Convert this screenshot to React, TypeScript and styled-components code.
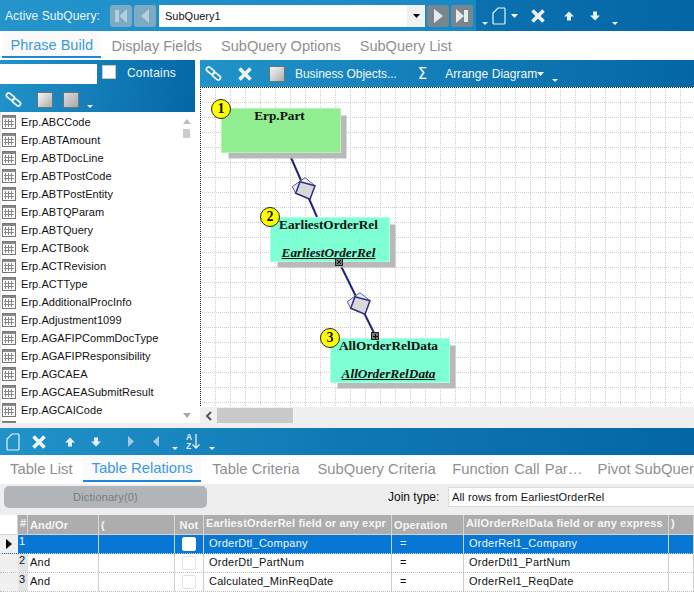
import React from 'react'
import styled, { createGlobalStyle } from 'styled-components'

const GlobalStyle = createGlobalStyle`
    html, body {
        margin: 0;
        padding: 0;
        background: #fff;
        font-family: "Liberation Sans", Arial, sans-serif;
    }
    * { box-sizing: border-box; }
`

const BAR = 'linear-gradient(90deg, #2193c9 0%, #0f78b4 50%, #0466a5 100%)'

const Shell = styled.div`
    width: 694px;
    height: 613px;
    overflow: hidden;
    display: flex;
    flex-direction: column;
    background: #fff;
`

/* top bar */
const TopBar = styled.div`
    height: 31px;
    flex: none;
    display: flex;
    align-items: center;
    background: ${BAR};
`
const SubQueryGroup = styled.div`
    width: 476px;
    height: 31px;
    flex: none;
    display: flex;
    align-items: center;
    padding-left: 5px;
    background: linear-gradient(90deg, #2494cb, #1988c4);
`
const BarLabel = styled.span`
    color: #eef6fb;
    font-size: 12px;
    letter-spacing: 0.1px;
    width: 105px;
    flex: none;
`
const NavButton = styled.div<{ $off?: boolean }>`
    width: 22px;
    height: 22px;
    flex: none;
    margin-right: 2px;
    border-radius: 3px;
    background: ${p => (p.$off ? '#7dabc4' : '#78878f')};
    color: ${p => (p.$off ? '#b4cfdd' : '#e8eaeb')};
    display: flex;
    align-items: center;
    justify-content: center;
`
const Combo = styled.div`
    width: 266px;
    height: 22px;
    flex: none;
    margin: 0 2px 0 1px;
    background: #fff;
    display: flex;
    align-items: center;
    justify-content: space-between;
    padding-left: 6px;
    font-size: 11px;
    color: #111;
`
const ComboArrow = styled.div`
    width: 18px;
    height: 22px;
    background: #f1f1f1;
    display: flex;
    align-items: center;
    justify-content: center;
`

/* toolbars */
const Tool = styled.span<{ $left?: number; $down?: number }>`
    display: inline-flex;
    align-items: center;
    flex: none;
    margin-left: ${p => p.$left ?? 0}px;
    margin-top: ${p => p.$down ?? 0}px;
    color: #fff;
`
const ToolText = styled(Tool)<{ $tight?: boolean }>`
    font-size: 12px;
    letter-spacing: ${p => (p.$tight ? '-0.05px' : '0.05px')};
    color: #f4f9fc;
`
const Sigma = styled(Tool)`
    font-size: 15px;
    font-family: "DejaVu Sans", sans-serif;
`
const Shade = styled.span<{ $dark?: boolean }>`
    display: inline-block;
    width: 16px;
    height: 16px;
    flex: none;
    border: 1px solid #6d7478;
    background: ${p =>
        p.$dark
            ? 'linear-gradient(135deg, #dcdcdc, #a9a9a9)'
            : 'linear-gradient(135deg, #f7f7f7, #adadad)'};
`

/* tabs */
const TabBar = styled.div<{ $pad: number }>`
    height: 29px;
    flex: none;
    display: flex;
    align-items: stretch;
    padding-left: ${p => p.$pad}px;
    background: #fff;
    white-space: nowrap;
    overflow: hidden;
`
const Tab = styled.div<{ $active?: boolean; $left?: number }>`
    display: flex;
    align-items: center;
    padding: 2px ${p => (p.$active ? 8.5 : 0)}px ${p => (p.$active ? 2 : 0)}px;
    margin-left: ${p => p.$left ?? 0}px;
    font-size: 14.800px;
    color: ${p => (p.$active ? '#3a9be2' : '#8f8f8f')};
    border-bottom: 2px solid ${p => (p.$active ? '#1c86dc' : 'transparent')};
    background: ${p => (p.$active ? '#fafafa' : 'transparent')};
    margin-bottom: 2px;
`
const TopTab = styled(Tab)`
    padding-top: 4px;
    font-size: 14.550px;
`
const WideTab = styled(Tab)`
    word-spacing: 1px;
`

/* middle */
const Middle = styled.div`
    height: 363px;
    flex: none;
    display: flex;
`
const SidePanel = styled.div`
    width: 195px;
    flex: none;
    display: flex;
    flex-direction: column;
    background: #fff;
`
const SideHeader = styled.div`
    height: 52px;
    flex: none;
    background: linear-gradient(100deg, #2194ca, #0466a5);
`
const SideRow = styled.div<{ $height: number }>`
    height: ${p => p.$height}px;
    display: flex;
    align-items: center;
`
const SearchBox = styled.div`
    width: 97px;
    height: 20px;
    flex: none;
    background: #fff;
`
const WhiteCheck = styled.span`
    width: 14px;
    height: 14px;
    margin: -3px 0 0 5px;
    flex: none;
    background: #fff;
    border: 1px solid #c8c8c8;
`
const ContainsLabel = styled.span`
    margin: -2px 0 0 11px;
    font-size: 12px;
    color: #f0f7fb;
    letter-spacing: 0.2px;
`
const ListArea = styled.div`
    position: relative;
    flex: 1;
    min-height: 0;
    overflow: hidden;
    border-left: 1px solid #e6e6e6;
    padding-top: 1px;
`
const ListItem = styled.div`
    height: 18px;
    display: flex;
    align-items: center;
    padding-left: 1px;
    font-size: 11px;
    letter-spacing: 0.05px;
    color: #111;
`
const ListText = styled.span`
    margin-left: 5px;
`
const ScrollTrack = styled.div`
    position: absolute;
    top: 0;
    right: 0;
    bottom: 0;
    width: 17px;
    background: #fff;
    display: flex;
    flex-direction: column;
    align-items: center;
`
const ScrollThumb = styled.div`
    width: 7px;
    height: 9px;
    margin-top: 5px;
    background: #cdcdcd;
`
const Spacer = styled.div`
    flex: 1;
`
const ScrollArrow = styled.div<{ $down?: boolean }>`
    width: 0;
    height: 0;
    margin-top: ${p => (p.$down ? 0 : 7)}px;
    margin-bottom: ${p => (p.$down ? 5 : 0)}px;
    border-left: 4px solid transparent;
    border-right: 4px solid transparent;
    border-bottom: ${p => (p.$down ? '0' : '5px solid #bdbdbd')};
    border-top: ${p => (p.$down ? '5px solid #a8a8a8' : '0')};
`
const Gutter = styled.div`
    width: 5px;
    flex: none;
    background: #fff;
`
const DiagramPanel = styled.div`
    flex: 1;
    min-width: 0;
    display: flex;
    flex-direction: column;
`
const DiagramBar = styled.div`
    height: 27px;
    flex: none;
    display: flex;
    align-items: center;
    background: linear-gradient(90deg, #2193c9, #0466a5);
`
const Canvas = styled.div`
    position: relative;
    height: 320px;
    flex: none;
    overflow: hidden;
    background: #fff;
`
const CanvasDrawing = styled.svg`
    position: absolute;
    left: 0;
    top: 0;
`
const Node = styled.div<{ $x: number; $y: number; $fill: string }>`
    position: absolute;
    left: ${p => p.$x}px;
    top: ${p => p.$y}px;
    width: 120px;
    height: 45px;
    padding-right: 3px;
    background: ${p => p.$fill};
    border: 1px solid rgba(255, 255, 255, 0.35);
    box-shadow: 6.500px 6.500px 0 -1px #b9b9b9;
    text-align: center;
    font-family: "Liberation Serif", "Times New Roman", serif;
    font-weight: bold;
    color: #111;
`
const NodeTitle = styled.div`
    font-size: 13.300px;
    line-height: 14px;
`
const NodeAlias = styled.div`
    font-size: 13.300px;
    line-height: 14px;
    margin-top: 14px;
    font-style: italic;
    text-decoration: underline;
`
const Badge = styled.div<{ $x: number; $y: number }>`
    position: absolute;
    left: ${p => p.$x}px;
    top: ${p => p.$y}px;
    width: 20px;
    height: 20px;
    border-radius: 50%;
    background: #ffff00;
    border: 1px solid #222;
    display: flex;
    align-items: center;
    justify-content: center;
    font-family: "Liberation Serif", serif;
    font-weight: bold;
    font-size: 14px;
    color: #111;
`
const HScroll = styled.div`
    flex: 1;
    display: flex;
    align-items: center;
    background: #f0f0f0;
    padding-top: 1px;
`
const HThumb = styled.div`
    width: 76px;
    height: 15px;
    margin-left: 5px;
    background: #c9c9c9;
`
const LeftChevron = styled.span`
    margin-left: 5px;
    display: inline-flex;
`

/* lower part */
const Divider = styled.div`
    height: 5px;
    flex: none;
    background: #eeeeee;
`
const LowerBar = styled.div`
    height: 27px;
    flex: none;
    display: flex;
    align-items: center;
    background: ${BAR};
`
const FilterRow = styled.div`
    height: 31px;
    flex: none;
    display: flex;
    align-items: flex-start;
    background: #eeeeee;
    padding: 2px 0 0 4px;
`
const DictButton = styled.div`
    width: 203px;
    height: 22px;
    flex: none;
    border-radius: 5px;
    background: #b1b5b7;
    color: #7a7d7f;
    font-size: 11px;
    letter-spacing: 0.2px;
    display: flex;
    align-items: center;
    justify-content: center;
`
const JoinLabel = styled.span`
    margin-left: 181px;
    width: 60px;
    flex: none;
    line-height: 22px;
    font-size: 12px;
    color: #111;
`
const JoinInput = styled.div`
    flex: 1;
    height: 20px;
    margin-top: 1px;
    padding-left: 3px;
    background: #fff;
    border: 1px solid #dcdcdc;
    border-right: 0;
    font-size: 11px;
    line-height: 18px;
    letter-spacing: 0.15px;
    color: #111;
`
const COLUMNS = '18px 10px 71px 76px 29px 188px 72px 205px 25px'
const HeadRow = styled.div`
    height: 20px;
    flex: none;
    display: grid;
    grid-template-columns: ${COLUMNS};
    background: #adadad;
    border-bottom: 1px solid #d4d4d4;
`
const HeadCell = styled.div<{ $center?: boolean; $low?: boolean }>`
    border-right: 1px solid #d6d6d6;
    padding-left: ${p => (p.$center ? 0 : 2)}px;
    padding-top: ${p => (p.$low ? 2 : 0)}px;
    text-align: ${p => (p.$center ? 'center' : 'left')};
    color: #f5f5f5;
    font-size: 11px;
    font-weight: bold;
    line-height: 17px;
    letter-spacing: 0.15px;
    white-space: nowrap;
    overflow: hidden;
`
const Corner = styled.div`
    background: #fff;
    border-right: 1px solid #d6d6d6;
`
const DataRow = styled.div<{ $selected?: boolean }>`
    height: 19px;
    flex: none;
    display: grid;
    grid-template-columns: ${COLUMNS};
    background: ${p => (p.$selected ? '#0777d6' : '#fff')};
    color: ${p => (p.$selected ? '#f2f8fd' : '#111')};
    border-bottom: 1px dotted ${p => (p.$selected ? '#d8d8d8' : '#bdbdbd')};
`
const RowMark = styled.div`
    background: #f0f0f0;
    display: flex;
    align-items: center;
    justify-content: center;
`
const RowNum = styled.div<{ $selected?: boolean }>`
    background: ${p => (p.$selected ? '#0777d6' : '#e4e4e4')};
    font-size: 11px;
    line-height: 13px;
    padding-left: 1px;
`
const Cell = styled.div<{ $inset?: number }>`
    border-right: 1px solid #cfcfcf;
    padding-left: ${p => p.$inset ?? 2}px;
    font-size: 11px;
    line-height: 16px;
    letter-spacing: 0.25px;
    white-space: nowrap;
    overflow: hidden;
`
const CheckCell = styled(Cell)`
    padding: 2px 0 0 7px;
`
const RowCheck = styled.div<{ $on?: boolean }>`
    width: 14px;
    height: 14px;
    border-radius: 2px;
    background: #fff;
    border: 1px solid ${p => (p.$on ? '#fff' : '#e2e2e2')};
`
const SortGlyph = styled.span`
    display: inline-flex;
    align-items: center;
    margin-left: 8px;
`
const SortLetters = styled.span`
    display: flex;
    flex-direction: column;
    font-size: 8.500px;
    font-weight: bold;
    line-height: 9px;
    color: #dfeef6;
`

const Chain = () => (
    <svg width="17" height="17" viewBox="0 0 17 17" fill="none" stroke="#e8f1f6" strokeWidth="1.700">
        <rect x="1" y="3.500" width="9" height="4.500" rx="2.200" transform="rotate(40 5.500 5.700)" />
        <rect x="7" y="9" width="9" height="4.500" rx="2.200" transform="rotate(40 11.500 11.200)" />
    </svg>
)
const Cross = () => (
    <svg width="14" height="14" viewBox="0 0 14 14" stroke="#f2f6f9" strokeWidth="3.600">
        <path d="M1.500 1.500l11 11M12.500 1.500l-11 11" />
    </svg>
)
const Page = () => (
    <svg width="14" height="18" viewBox="0 0 14 18" fill="none" stroke="#e9f2f7" strokeWidth="1.200">
        <path d="M6 1h6.500a1 1 0 0 1 0.500 1v14a1 1 0 0 1-1 1H2a1 1 0 0 1-1-1V6z" />
    </svg>
)
const UpArrow = () => (
    <svg width="10" height="10" viewBox="0 0 10 10" fill="#e6f0f6">
        <path d="M5 0.500L10 5.500H7V9.500H3V5.500H0z" />
    </svg>
)
const DownArrow = () => (
    <svg width="10" height="10" viewBox="0 0 10 10" fill="#e6f0f6">
        <path d="M5 9.500L10 4.500H7V0.500H3V4.500H0z" />
    </svg>
)
const Overflow = () => (
    <svg width="6" height="18" viewBox="0 0 6 18" fill="#f2f7fa">
        <path d="M0 14h6l-3 3z" />
    </svg>
)
const Caret = ({ color = '#fff' }: { color?: string }) => (
    <svg width="7" height="4" viewBox="0 0 7 4" fill={color}>
        <path d="M0 0h7L3.500 4z" />
    </svg>
)
const SkipFirst = () => (
    <svg width="16" height="16" viewBox="0 0 16 16" fill="currentColor">
        <path d="M2 2h4v12H2zM14 1v14L6.500 8z" />
    </svg>
)
const Back = () => (
    <svg width="12" height="16" viewBox="0 0 12 16" fill="currentColor">
        <path d="M10 1v14L2 8z" />
    </svg>
)
const Forward = () => (
    <svg width="12" height="16" viewBox="0 0 12 16" fill="currentColor">
        <path d="M2 1v14l9-7z" />
    </svg>
)
const SkipLast = () => (
    <svg width="16" height="16" viewBox="0 0 16 16" fill="currentColor">
        <path d="M2 1v14l8-7zM10 2h4v12h-4z" />
    </svg>
)
const TriRight = () => (
    <svg width="6" height="11" viewBox="0 0 6 11" fill="#a9c9dc">
        <path d="M0 0v11l6-5.500z" />
    </svg>
)
const TriLeft = () => (
    <svg width="6" height="11" viewBox="0 0 6 11" fill="#a9c9dc">
        <path d="M6 0v11L0 5.500z" />
    </svg>
)
const SortArrow = () => (
    <svg width="8" height="15" viewBox="0 0 8 15" fill="none" stroke="#e6f0f6" strokeWidth="1.300">
        <path d="M4 0v14M0.500 10.500L4 14l3.500-3.500" />
    </svg>
)
const TableIcon = () => (
    <svg width="14" height="14" viewBox="0 0 14 14" shapeRendering="crispEdges">
        <rect x="0.500" y="0.500" width="13" height="13" fill="#fff" stroke="#777" />
        <rect x="1" y="1" width="12" height="2" fill="#8a8a8a" />
        <path d="M3.500 4v8M6.500 4v8M9.500 4v8M2 6.500h10M2 9.500h10" stroke="#888" fill="none" />
    </svg>
)
const RowPointer = () => (
    <svg width="6" height="10" viewBox="0 0 6 10" fill="#000">
        <path d="M0 0v10l6-5z" />
    </svg>
)

const Diamond = ({ dx, dy }: { dx: number; dy: number }) => (
    <g transform={`translate(${dx} ${dy})`}>
        <path d="M92.300 99.700L105 90.700L115 98.700L95.700 106.300z" fill="#e8eef5" stroke="#5b5ba0" strokeWidth="1" />
        <path d="M100 94.700L115 98.700L110 112.300L95.700 106.300z" fill="#d9d9d9" stroke="#2e2e85" strokeWidth="1.500" />
    </g>
)

const Marker = ({ x, y, plus }: { x: number; y: number; plus?: boolean }) => (
    <g shapeRendering="crispEdges">
        <rect x={x} y={y} width="7" height="7" fill="#777" stroke="#222" />
        <path
            d={plus
                ? `M${x + 1} ${y + 3.500}h5M${x + 3.500} ${y + 1}v5`
                : `M${x + 1.500} ${y + 1.500}l4 4M${x + 5.500} ${y + 1.500}l-4 4`}
            stroke="#111"
        />
    </g>
)

const tables = [
    'ABCCode', 'ABTAmount', 'ABTDocLine', 'ABTPostCode', 'ABTPostEntity', 'ABTQParam', 'ABTQuery',
    'ACTBook', 'ACTRevision', 'ACTType', 'AdditionalProcInfo', 'Adjustment1099', 'AGAFIPCommDocType',
    'AGAFIPResponsibility', 'AGCAEA', 'AGCAEASubmitResult', 'AGCAICode',
]

const relations = [
    { id: 1, andOr: '', left: 'OrderDtl_Company', right: 'OrderRel1_Company' },
    { id: 2, andOr: 'And', left: 'OrderDtl_PartNum', right: 'OrderDtl1_PartNum' },
    { id: 3, andOr: 'And', left: 'Calculated_MinReqDate', right: 'OrderRel1_ReqDate' },
]

export default function App() {
    return (
        <Shell>
            <GlobalStyle />
            <TopBar>
                <SubQueryGroup>
                    <BarLabel>Active SubQuery:</BarLabel>
                    <NavButton $off><SkipFirst /></NavButton>
                    <NavButton $off><Back /></NavButton>
                    <Combo>
                        SubQuery1
                        <ComboArrow><Caret color="#000" /></ComboArrow>
                    </Combo>
                    <NavButton><Forward /></NavButton>
                    <NavButton><SkipLast /></NavButton>
                </SubQueryGroup>
                <Tool $left={6} $down={3}><Overflow /></Tool>
                <Tool $left={4}><Page /></Tool>
                <Tool $left={5}><Caret /></Tool>
                <Tool $left={13}><Cross /></Tool>
                <Tool $left={19}><UpArrow /></Tool>
                <Tool $left={16}><DownArrow /></Tool>
                <Tool $left={12} $down={3}><Overflow /></Tool>
            </TopBar>

            <TabBar $pad={2}>
                <TopTab $active>Phrase Build</TopTab>
                <TopTab $left={10}>Display Fields</TopTab>
                <TopTab $left={19}>SubQuery Options</TopTab>
                <TopTab $left={19}>SubQuery List</TopTab>
            </TabBar>

            <Middle>
                <SidePanel>
                    <SideHeader>
                        <SideRow $height={27}>
                            <SearchBox />
                            <WhiteCheck />
                            <ContainsLabel>Contains</ContainsLabel>
                        </SideRow>
                        <SideRow $height={25}>
                            <Tool $left={5}><Chain /></Tool>
                            <Tool $left={15}><Shade /></Tool>
                            <Tool $left={10}><Shade $dark /></Tool>
                            <Tool $left={8}><Overflow /></Tool>
                        </SideRow>
                    </SideHeader>
                    <ListArea>
                        {tables.map(name => (
                            <ListItem key={name}>
                                <TableIcon />
                                <ListText>Erp.{name}</ListText>
                            </ListItem>
                        ))}
                        <ListItem><TableIcon /></ListItem>
                        <ScrollTrack>
                            <ScrollArrow />
                            <ScrollThumb />
                            <Spacer />
                            <ScrollArrow $down />
                        </ScrollTrack>
                    </ListArea>
                </SidePanel>
                <Gutter />
                <DiagramPanel>
                    <DiagramBar>
                        <Tool $left={5}><Chain /></Tool>
                        <Tool $left={16}><Cross /></Tool>
                        <Tool $left={17}><Shade /></Tool>
                        <ToolText $left={10} $tight>Business Objects...</ToolText>
                        <Sigma $left={21}>Σ</Sigma>
                        <ToolText $left={18}>Arrange Diagram</ToolText>
                        <Tool><Caret /></Tool>
                        <Tool $left={8}><Overflow /></Tool>
                    </DiagramBar>
                    <Canvas>
                        <CanvasDrawing width="494" height="320" viewBox="0 0 494 320">
                            <defs>
                                <pattern id="dots" width="30" height="30" patternUnits="userSpaceOnUse">
                                    <path
                                        d="M0 0.500H30M0 15.500H30M0.500 0V30M15.500 0V30"
                                        stroke="#cfcfcf"
                                        strokeDasharray="1 1"
                                        fill="none"
                                        shapeRendering="crispEdges"
                                    />
                                </pattern>
                            </defs>
                            <rect width="494" height="320" fill="url(#dots)" />
                            <path
                                d="M0.500 0V320M0 0.500H494"
                                stroke="#222"
                                strokeDasharray="1 1"
                                shapeRendering="crispEdges"
                            />
                            <path d="M89 66L117 130M139 175L175 248" stroke="#23237c" strokeWidth="2" fill="none" />
                            <Diamond dx={0} dy={0} />
                            <Diamond dx={55} dy={115} />
                        </CanvasDrawing>
                        <Node $x={21} $y={21} $fill="#90ee90">
                            <NodeTitle>Erp.Part</NodeTitle>
                        </Node>
                        <Node $x={70} $y={130} $fill="#7fffd4">
                            <NodeTitle>EarliestOrderRel</NodeTitle>
                            <NodeAlias>EarliestOrderRel</NodeAlias>
                        </Node>
                        <Node $x={130} $y={251} $fill="#7fffd4">
                            <NodeTitle>AllOrderRelData</NodeTitle>
                            <NodeAlias>AllOrderRelData</NodeAlias>
                        </Node>
                        <CanvasDrawing width="494" height="320" viewBox="0 0 494 320">
                            <Marker x={135.500} y={171.500} />
                            <Marker x={171.500} y={245.500} plus />
                        </CanvasDrawing>
                        <Badge $x={11} $y={12}>1</Badge>
                        <Badge $x={60} $y={120}>2</Badge>
                        <Badge $x={120} $y={241}>3</Badge>
                    </Canvas>
                    <HScroll>
                        <LeftChevron>
                            <svg width="7" height="10" viewBox="0 0 7 10" fill="none" stroke="#555" strokeWidth="2">
                                <path d="M6 1L2 5l4 4" />
                            </svg>
                        </LeftChevron>
                        <HThumb />
                    </HScroll>
                </DiagramPanel>
            </Middle>

            <Divider />
            <LowerBar>
                <Tool $left={6}><Page /></Tool>
                <Tool $left={12}><Cross /></Tool>
                <Tool $left={19}><UpArrow /></Tool>
                <Tool $left={16}><DownArrow /></Tool>
                <Tool $left={27}><TriRight /></Tool>
                <Tool $left={19}><TriLeft /></Tool>
                <Tool $left={13}><Overflow /></Tool>
                <SortGlyph>
                    <SortLetters><span>A</span><span>Z</span></SortLetters>
                    <SortArrow />
                </SortGlyph>
                <Tool $left={9}><Overflow /></Tool>
            </LowerBar>
            <TabBar $pad={10}>
                <Tab>Table List</Tab>
                <Tab $left={10.500} $active>Table Relations</Tab>
                <Tab $left={11}>Table Criteria</Tab>
                <Tab $left={18}>SubQuery Criteria</Tab>
                <WideTab $left={16.500}>Function Call Par…</WideTab>
                <Tab $left={15}>Pivot SubQuery</Tab>
            </TabBar>
            <FilterRow>
                <DictButton>Dictionary(0)</DictButton>
                <JoinLabel>Join type:</JoinLabel>
                <JoinInput>All rows from EarliestOrderRel</JoinInput>
            </FilterRow>
            <HeadRow>
                <Corner />
                <HeadCell>#</HeadCell>
                <HeadCell $low>And/Or</HeadCell>
                <HeadCell $low>(</HeadCell>
                <HeadCell $center $low>Not</HeadCell>
                <HeadCell>EarliestOrderRel field or any expr</HeadCell>
                <HeadCell $low>Operation</HeadCell>
                <HeadCell>AllOrderRelData field or any express</HeadCell>
                <HeadCell>)</HeadCell>
            </HeadRow>
            {relations.map(row => {
                const selected = row.id === 1
                return (
                    <DataRow key={row.id} $selected={selected}>
                        <RowMark>{selected && <RowPointer />}</RowMark>
                        <RowNum $selected={selected}>{row.id}</RowNum>
                        <Cell>{row.andOr}</Cell>
                        <Cell />
                        <CheckCell><RowCheck $on={selected} /></CheckCell>
                        <Cell $inset={5}>{row.left}</Cell>
                        <Cell $inset={8}>=</Cell>
                        <Cell $inset={5}>{row.right}</Cell>
                        <Cell />
                    </DataRow>
                )
            })}
        </Shell>
    )
}
